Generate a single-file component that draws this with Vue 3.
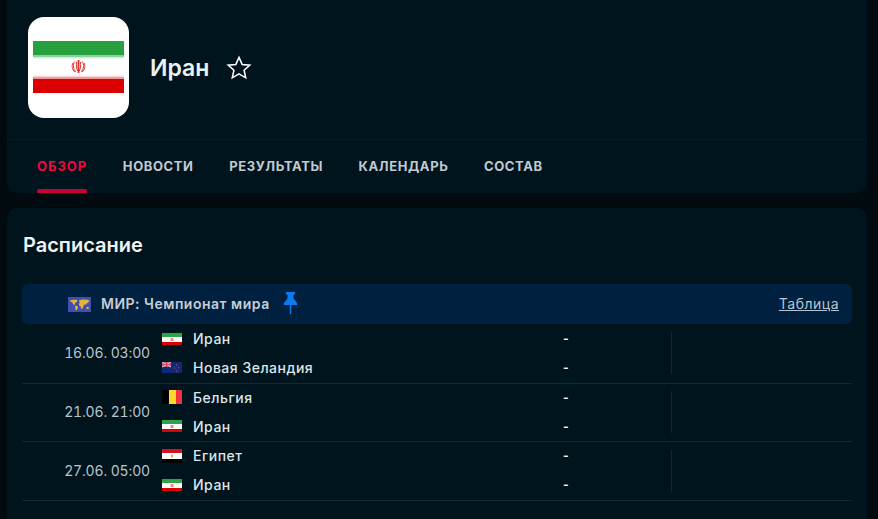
<template>
  <div class="page">
    <section class="card top-card">
      <div class="hero">
        <div class="logo">
          <svg viewBox="0 0 91 52" width="91" height="52">
            <rect width="91" height="14.500" fill="#27a140" />
            <rect y="14.500" width="91" height="1.500" fill="#8fd0a0" />
            <rect y="16" width="91" height="1.500" fill="#d3ecd9" />
            <rect y="34.500" width="91" height="1.500" fill="#fbdcdc" />
            <rect y="36" width="91" height="2" fill="#f09a9a" />
            <rect y="38" width="91" height="14" fill="#da0000" />
            <g fill="none" stroke="#e03030" stroke-width="1">
              <path d="M45.500 19v13" stroke-width="1.800" />
              <path d="M43.500 21c-.4 3 0 7 1.200 9" />
              <path d="M47.500 21c.4 3 0 7-1.200 9" />
              <path d="M41.800 20.500c-2.200 3-1.800 8 1.400 10.500" />
              <path d="M49.200 20.500c2.200 3 1.800 8-1.400 10.500" />
              <path d="M40 22c-1.600 2.800-.8 6.600 1.800 9" />
              <path d="M51 22c1.600 2.800.8 6.600-1.800 9" />
            </g>
          </svg>
        </div>
        <h1 class="title">Иран</h1>
        <svg class="star" viewBox="0 0 24 24" width="26" height="26">
          <path d="M12 2.200l2.900 6.500 7.100.7-5.300 4.700 1.500 7-6.200-3.600-6.200 3.600 1.500-7L2 9.400l7.100-.7z" fill="none" stroke="#fff" stroke-width="1.400" stroke-linejoin="miter" />
        </svg>
      </div>
      <nav class="tabs">
        <a v-for="(tab, i) in tabs" :key="tab" class="tab" :class="{ active: i === 0 }">{{ tab }}</a>
      </nav>
    </section>

    <section class="card schedule">
      <h2 class="heading">Расписание</h2>
      <div class="league">
        <svg class="world" viewBox="0 0 23 15" width="23" height="15">
          <rect width="23" height="15" fill="#3f4fb2" />
          <g fill="#e8b530">
            <path d="M2 3.500l4-.8 3.500.3-.6 1.800-1.600 1.200-.6 1.800-1.500-.3-1-2.200-2.200-.8z" />
            <path d="M7 8.500l2.500.8.500 1.200-1.200 2.500-1 .5-.6-2.500z" />
            <path d="M11 3.500l3-1 5.500.2 2 1-1.500 2-1.500.8-.3 1.500-1-.8-1.200.5-.5 1.300-.8 2.500-1.400.5-1-3-1.200-.5-.2-2 1.200-.8-1-1z" />
            <path d="M18 10.500l2.200-.8 1 1.800-2.200.8z" />
          </g>
        </svg>
        <span class="league-name">МИР: Чемпионат мира</span>
        <svg class="pin" viewBox="0 0 13 22" width="13" height="22">
          <path d="M2 0h9v2l-1.500 1v3.500L13 11v2H7.200v9H5.800v-9H0v-2l3.500-4.500V3L2 2z" fill="#0a7cf0" />
        </svg>
        <a class="table-link">Таблица</a>
      </div>
      <div v-for="match in matches" :key="match.time" class="match">
        <div class="time">{{ match.time }}</div>
        <div class="teams">
          <div v-for="team in match.teams" :key="team" class="team">
            <svg class="flag" :viewBox="`0 0 20 ${flagHeight(team)}`" width="20" :height="flagHeight(team)">
              <template v-if="team === 'Иран'">
                <rect width="20" height="4" fill="#2fa348" />
                <rect y="4" width="20" height="5" fill="#fff" />
                <rect y="9" width="20" height="3" fill="#da0000" />
                <rect x="8.500" y="5" width="3" height="3" fill="#f08a8a" />
              </template>
              <template v-else-if="team === 'Новая Зеландия'">
                <rect width="20" height="11" fill="#0e2a78" />
                <rect width="9" height="5" fill="#8a6f9e" />
                <path d="M0 0l9 5M9 0L0 5" stroke="#e9c3cf" stroke-width="1" />
                <path d="M4.500 0v5M0 2.500h9" stroke="#d8485e" stroke-width="1.200" />
                <g fill="#b8404f">
                  <rect x="14" y="2" width="1.200" height="1.200" />
                  <rect x="16" y="5" width="1.200" height="1.200" />
                  <rect x="12" y="5.500" width="1.200" height="1.200" />
                  <rect x="14" y="8.500" width="1.200" height="1.200" />
                </g>
              </template>
              <template v-else-if="team === 'Бельгия'">
                <rect width="7" height="14" fill="#000" />
                <rect x="7" width="7" height="14" fill="#fbd92f" />
                <rect x="14" width="6" height="14" fill="#ef3340" />
              </template>
              <template v-else>
                <rect width="20" height="4" fill="#d8101f" />
                <rect y="4" width="20" height="6" fill="#fff" />
                <rect y="10" width="20" height="4" fill="#000" />
                <rect x="9" y="5.700" width="2" height="2.600" fill="#d9a73a" />
              </template>
            </svg>
            <span class="team-name">{{ team }}</span>
            <span class="score">-</span>
          </div>
        </div>
        <div class="extra"></div>
      </div>
    </section>
  </div>
</template>

<script setup>
const tabs = ['Обзор', 'Новости', 'Результаты', 'Календарь', 'Состав']

const matches = [
  { time: '16.06. 03:00', teams: ['Иран', 'Новая Зеландия'] },
  { time: '21.06. 21:00', teams: ['Бельгия', 'Иран'] },
  { time: '27.06. 05:00', teams: ['Египет', 'Иран'] }
]

// flags keep their own aspect ratio in the 20px slot
const flagHeights = { 'Иран': 12, 'Новая Зеландия': 11, 'Бельгия': 14, 'Египет': 14 }
const flagHeight = (team) => flagHeights[team] || 12
</script>

<style scoped>
.page {
  height: 519px;
  overflow: hidden;
  padding: 0 11px 0 7px;
  box-sizing: border-box;
  background: #010a0f;
  font-family: Inter, "Noto Sans", sans-serif;
  color: #e6edf0;
}

.card {
  background: #00141e;
  border-radius: 10px;
}

.top-card {
  height: 193px;
  border-radius: 0 0 10px 10px;
}

.hero {
  display: flex;
  align-items: center;
  padding: 17px 0 21px 21px;
  border-bottom: 1px solid #021c26;
}

.logo {
  display: flex;
  align-items: center;
  justify-content: center;
  width: 101px;
  height: 101px;
  border-radius: 16px;
  background: #fff;
}

.logo svg {
  display: block;
  margin-bottom: 1px;
}

.title {
  margin: 0 0 0 21px;
  font-size: 23px;
  font-weight: 600;
  color: #eaf1f5;
}

.star {
  margin-left: 17px;
}

.tabs {
  display: flex;
  gap: 35.600px;
  height: 53px;
  padding-left: 30px;
}

.tab {
  position: relative;
  line-height: 53px;
  font-size: 13px;
  font-weight: 700;
  letter-spacing: 0.6px;
  text-transform: uppercase;
  color: #c0cad0;
}

.tab.active {
  letter-spacing: 1px;
  color: #f0063f;
}

.tab.active::after {
  content: '';
  position: absolute;
  left: 0;
  right: 0;
  bottom: 0;
  height: 4px;
  border-radius: 2px 2px 0 0;
  background: #c80037;
}

.schedule {
  height: 320px;
  margin-top: 15px;
  padding: 0 15px;
}

.heading {
  margin: 0;
  padding: 24px 0 0 1px;
  height: 52px;
  font-size: 20px;
  line-height: 26px;
  font-weight: 600;
  color: #eef3f6;
}

.league {
  display: flex;
  align-items: center;
  height: 40px;
  margin-bottom: 1.100px;
  padding: 0 13px 2px 46px;
  box-sizing: border-box;
  border-radius: 6px;
  background: #00203f;
}

.league-name {
  margin-left: 10px;
  font-size: 14px;
  font-weight: 600;
  letter-spacing: 0.5px;
  color: #c4ced6;
}

.pin {
  margin-left: 14px;
}

.world {
  margin-top: 2px;
}

.table-link {
  margin-left: auto;
  font-size: 14px;
  letter-spacing: 0.5px;
  color: #b6c4cf;
  text-decoration: underline;
}

.match {
  display: flex;
  align-items: center;
  height: 58.600px;
  box-sizing: border-box;
  border-bottom: 1px solid #0f2a33;
}

.time {
  width: 128px;
  margin-top: -2px;
  text-align: right;
  font-size: 14px;
  font-variant-numeric: tabular-nums;
  letter-spacing: -0.150px;
  color: #b9c4ca;
}

.teams {
  width: 509px;
  margin: -1.600px 0 0 12px;
}

.team {
  display: flex;
  align-items: center;
  height: 28.800px;
}

.flag {
  flex-shrink: 0;
}

.team-name {
  margin-left: 11px;
  width: 370px;
  font-size: 14px;
  font-weight: 500;
  letter-spacing: 0.5px;
  color: #dde5ea;
}

.score {
  font-size: 12px;
  font-weight: 700;
  color: #fff;
}

.extra {
  height: 42px;
  margin-top: -1px;
  border-left: 1px solid #15262e;
}
</style>

<style>
html, body {
  background: #010a0f;
}
</style>
